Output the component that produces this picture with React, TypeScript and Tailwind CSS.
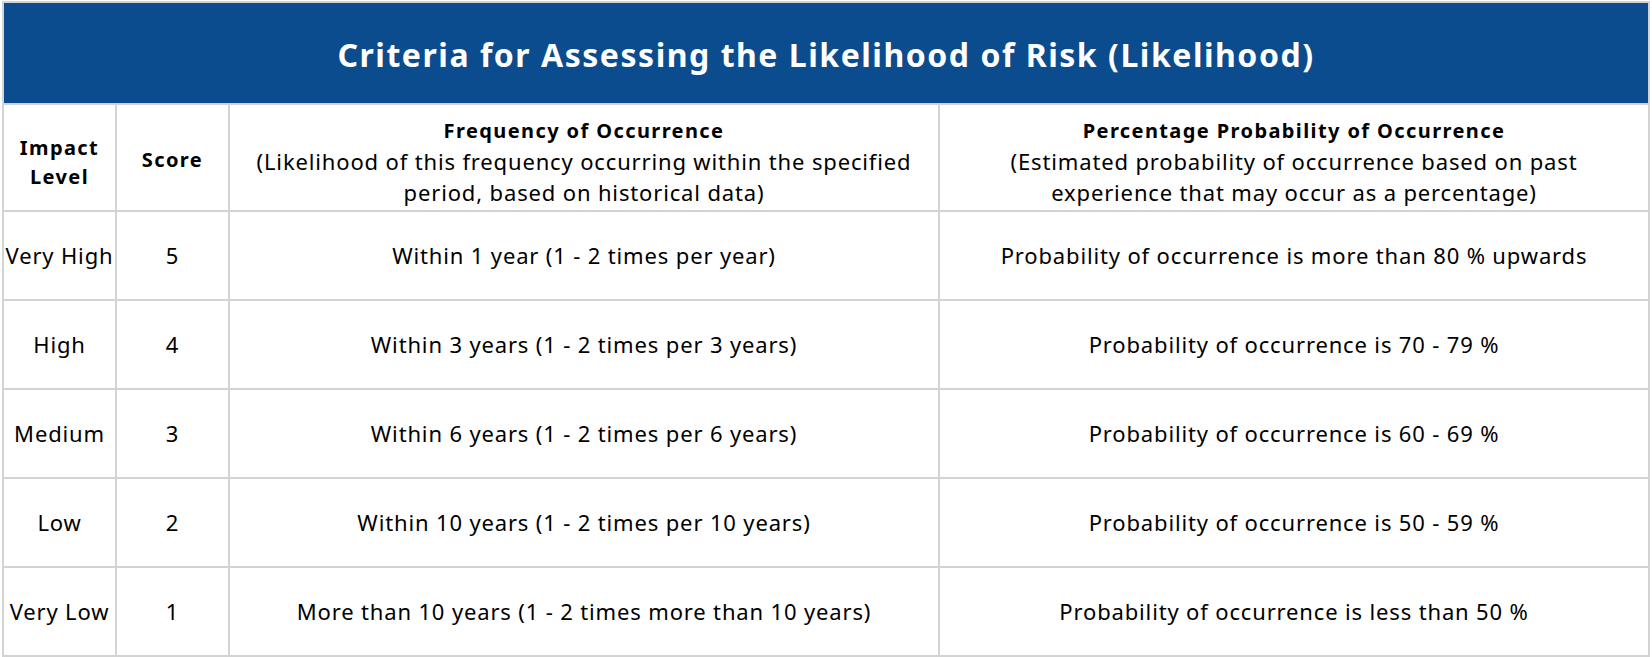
import React from "react"

const rows = [
  {
    level: "Very High",
    score: 5,
    freq: "Within 1 year (1 - 2 times per year)",
    prob: "Probability of occurrence is more than 80 % upwards",
  },
  {
    level: "High",
    score: 4,
    freq: "Within 3 years (1 - 2 times per 3 years)",
    prob: "Probability of occurrence is 70 - 79 %",
  },
  {
    level: "Medium",
    score: 3,
    freq: "Within 6 years (1 - 2 times per 6 years)",
    prob: "Probability of occurrence is 60 - 69 %",
  },
  {
    level: "Low",
    score: 2,
    freq: "Within 10 years (1 - 2 times per 10 years)",
    prob: "Probability of occurrence is 50 - 59 %",
  },
  {
    level: "Very Low",
    score: 1,
    freq: "More than 10 years (1 - 2 times more than 10 years)",
    prob: "Probability of occurrence is less than 50 %",
  },
]

const cell = "bg-white flex items-center justify-center text-center"
const body = "text-[22px] tracking-[0.85px] whitespace-nowrap"
const bold = "font-bold text-[20px] tracking-[1.4px]"

export default function App() {
  return (
    <div
      className="w-[1652px] h-[657px] bg-white px-[2px] pt-[1px] text-black"
      style={{ fontFamily: '"Noto Sans", "Open Sans", sans-serif' }}
    >
      <div className="grid grid-cols-[111px_111px_708px_1fr] grid-rows-[100px_105px_repeat(5,87px)] gap-[2px] p-[2px] bg-[#d3d3d3]">
        {/* title */}
        <div className="col-span-4 bg-[#0b4c8f] flex items-center justify-center">
          <h1 className="text-white font-bold text-[32px] tracking-[1.52px] pt-[3px]">
            Criteria for Assessing the Likelihood of Risk (Likelihood)
          </h1>
        </div>

        {/* header row */}
        <div className={`${cell} ${bold} leading-[29px] pt-[8px]`}>
          Impact
          <br />
          Level
        </div>
        <div className={`${cell} ${bold} pt-[4px]`}>Score</div>
        <div className={`${cell} flex-col leading-[31px] pt-[8px]`}>
          <span className={bold}>Frequency of Occurrence</span>
          <span className={body}>(Likelihood of this frequency occurring within the specified</span>
          <span className={body}>period, based on historical data)</span>
        </div>
        <div className={`${cell} flex-col leading-[31px] pt-[8px]`}>
          <span className={bold}>Percentage Probability of Occurrence</span>
          <span className={body}>(Estimated probability of occurrence based on past</span>
          <span className={body}>experience that may occur as a percentage)</span>
        </div>

        {/* data */}
        {rows.map((r) => (
          <React.Fragment key={r.score}>
            <div className={`${cell} ${body}`}>{r.level}</div>
            <div className={`${cell} ${body}`}>{r.score}</div>
            <div className={`${cell} ${body}`}>{r.freq}</div>
            <div className={`${cell} ${body}`}>{r.prob}</div>
          </React.Fragment>
        ))}
      </div>
    </div>
  )
}
